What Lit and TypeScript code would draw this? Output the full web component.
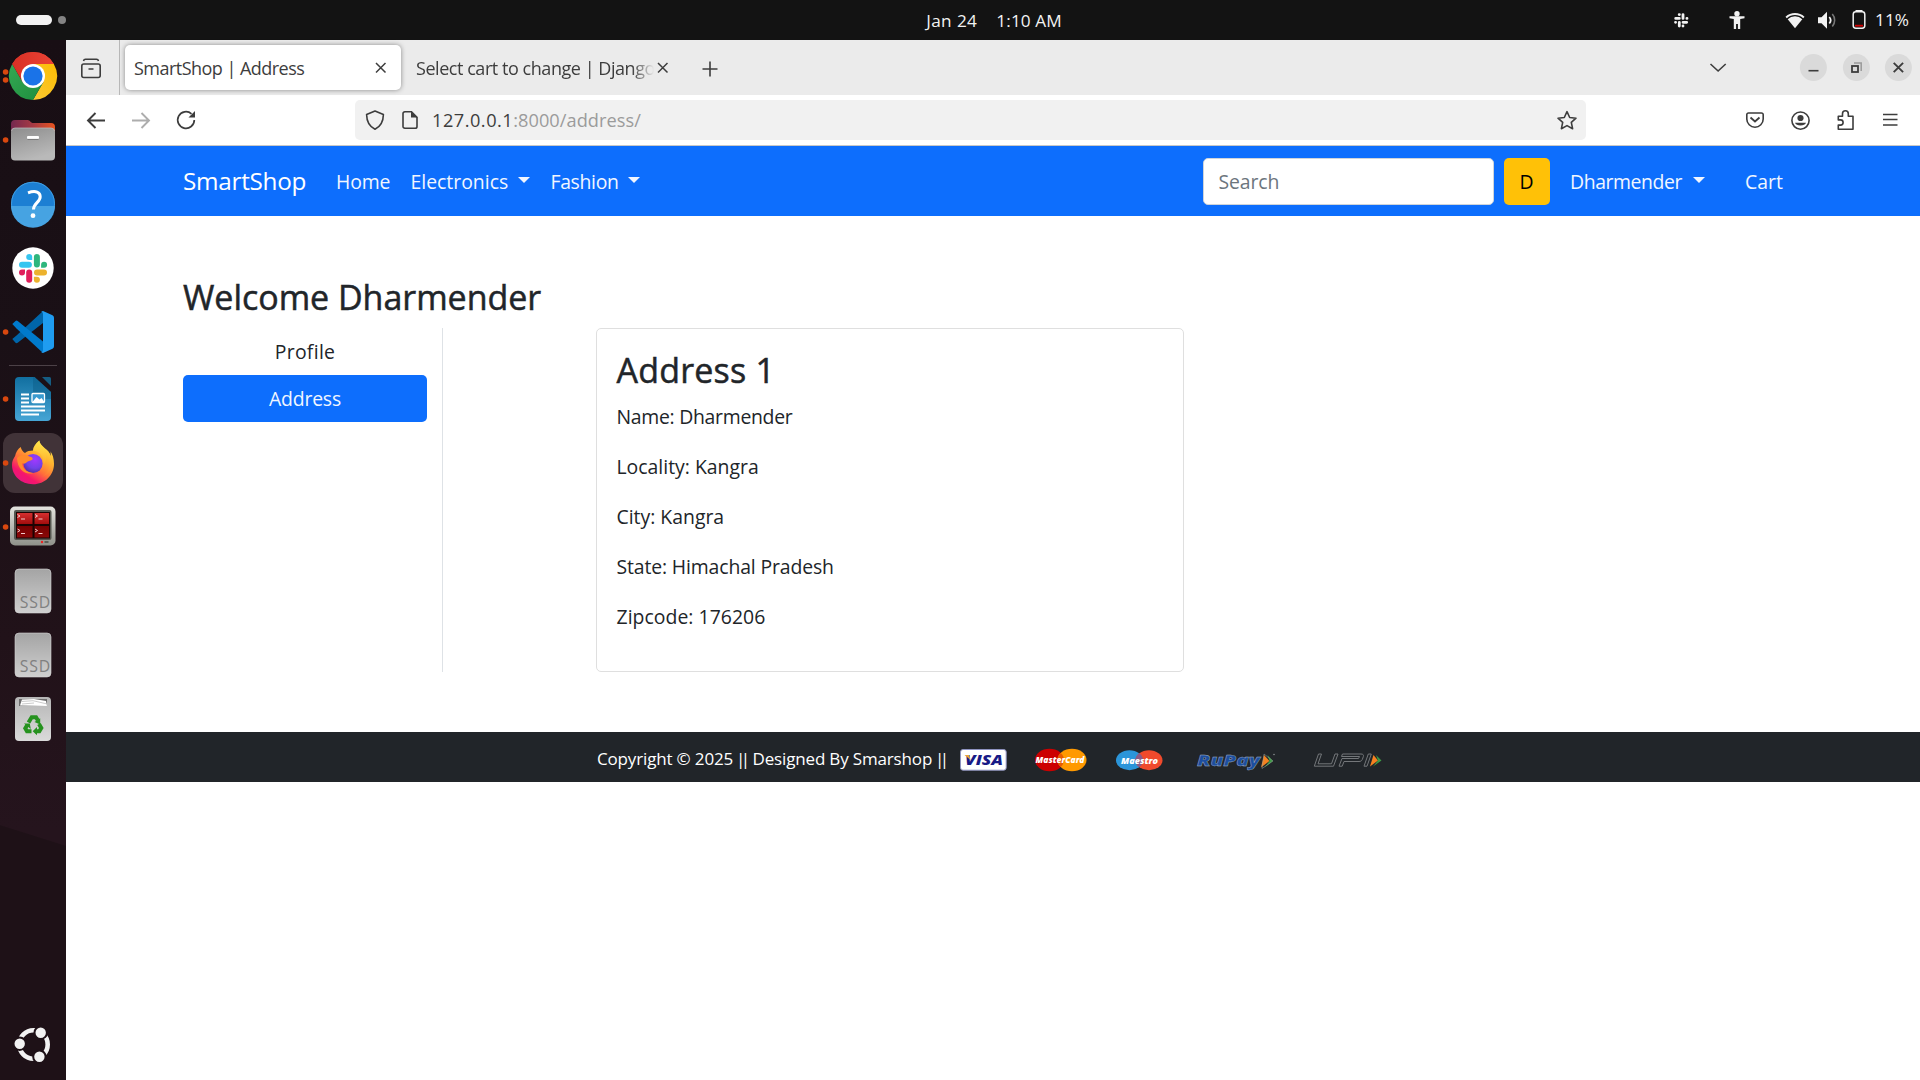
import { LitElement, html, svg, css } from "lit";
import { customElement } from "lit/decorators.js";

const dot = (y: number) => svg`<circle cx="5.6" cy=${y} r="2.8" fill="#d9480f"/>`;

const chrome = svg`
  ${dot(28)}${dot(36)}
  <defs>
    <linearGradient id="cr" x1="0" y1="0" x2="1" y2="0"><stop offset="0" stop-color="#d93025"/><stop offset="1" stop-color="#ea4335"/></linearGradient>
    <linearGradient id="cg" x1="0" y1="0" x2="1" y2="1"><stop offset="0" stop-color="#34a853"/><stop offset="1" stop-color="#1e8e3e"/></linearGradient>
    <linearGradient id="cy" x1="0" y1="1" x2="1" y2="0"><stop offset="0" stop-color="#fcc934"/><stop offset="1" stop-color="#fbbc04"/></linearGradient>
  </defs>
  <path d="M12.2 20A24 24 0 0 1 53.8 20L33 32Z" fill="url(#cr)"/>
  <path d="M53.8 20A24 24 0 0 1 33 56L43.4 38 33 20Z" fill="url(#cy)"/>
  <path d="M33 56A24 24 0 0 1 12.2 20L22.6 38 33 44 43.4 38Z" fill="url(#cg)"/>
  <path d="M12.2 20A24 24 0 0 1 53.8 20L33 20 22.6 38Z" fill="url(#cr)"/>
  <circle cx="33" cy="32" r="12" fill="#fff"/><circle cx="33" cy="32" r="9.6" fill="#1a73e8"/>`;

const files = svg`
  ${dot(32)}
  <defs>
    <linearGradient id="fb" x1="0" y1="0" x2="1" y2="0"><stop offset="0" stop-color="#74284f"/><stop offset=".5" stop-color="#a63a44"/><stop offset="1" stop-color="#e95420"/></linearGradient>
    <linearGradient id="ff" x1="0" y1="0" x2="0.4" y2="1"><stop offset="0" stop-color="#8d8d8d"/><stop offset="1" stop-color="#b9b9b9"/></linearGradient>
  </defs>
  <path d="M11 16a4 4 0 0 1 4-4h12.500c1.500 0 2 .8 3 1.800s1.500 1.200 3 1.200H51a4 4 0 0 1 4 4v15H11Z" fill="url(#fb)"/>
  <rect x="11" y="20" width="44" height="32.500" rx="4" fill="url(#ff)"/>
  <path d="M11.500 23a3.500 3.500 0 0 1 3.500-3H51a3.500 3.500 0 0 1 3.500 3" fill="none" stroke="#c0c0c0" stroke-width=".7"/>
  <rect x="27" y="28" width="12" height="3" rx="1" fill="#fff"/><path d="M27.500 31.400h11" stroke="#6d6d6d" stroke-width=".8"/>`;

const help = svg`
  <circle cx="33" cy="31.700" r="22" fill="#1c7fd3"/>
  <path d="M11 34a22 21.700 0 0 0 44 0Z" fill="#46a3e2"/>
  <circle cx="33" cy="31.700" r="21.500" fill="none" stroke="#4aa6e6" stroke-width=".8"/>
  <path d="M28 20.800c8-3 12.200-.4 12.200 4 0 5.500-6.700 6.400-6.700 12.700" fill="none" stroke="#fff" stroke-width="3"/>
  <circle cx="33" cy="43.700" r="2.400" fill="#fff"/>`;

const slack = svg`
  <circle cx="33" cy="32" r="20.700" fill="#fff"/>
  <g stroke-width="6" stroke-linecap="round">
    <path d="M22 28.700h6.900" stroke="#36c5f0"/><path d="M36.900 21v7.600" stroke="#2eb67d"/>
    <path d="M37 36.500h7" stroke="#ecb22e"/><path d="M29.200 36.500v7.300" stroke="#e01e5a"/>
  </g>
  <path d="M32.200 24v-3a3 3 0 1 0-3 3Z" fill="#36c5f0"/><path d="M41.100 31.700h3a3 3 0 1 0-3-3Z" fill="#2eb67d"/>
  <path d="M33.900 40.800v3a3 3 0 1 0 3-3Z" fill="#ecb22e"/><path d="M25 33.500h-3a3 3 0 1 0 3 3Z" fill="#e01e5a"/>`;

const vscode = svg`
  ${dot(32)}
  <path d="M43 11l-26.500 24.500-4.200 3.500 3.200 3.800q1 .8 2.200 0L43 23Z" fill="#0065a9"/>
  <path d="M12.300 24l3.200-3q1-.8 2.200 0L43 41.500V53L16.500 28.500Z" fill="#007acc"/>
  <path d="M43 11l9.500 4.300q1.500.8 1.500 2.500v28.500q0 1.700-1.500 2.500L43 53l-2-1q2 .5 2-2V14q0-2.500-2-2Z" fill="#1f9cf0"/>`;

const writer = svg`
  ${dot(32)}
  <defs><linearGradient id="wr" x1="0" y1="0" x2="0" y2="1"><stop offset="0" stop-color="#116fa0"/><stop offset="1" stop-color="#46a5d5"/></linearGradient></defs>
  <path d="M19 10h15.500L51 25v25a4 4 0 0 1-4 4H19a4 4 0 0 1-4-4V14a4 4 0 0 1 4-4Z" fill="url(#wr)"/>
  <path d="M33 10h1.500L51 25v7H33Z" fill="#0b5a86" opacity=".45"/>
  <path d="M42 10h7.500q1.500 0 1.500 1.500V19Z" fill="#155d83"/>
  <path d="M21 27.500h8M21 31.500h8M21 35.500h8M21 39.500h24M21 43.500h24M21 47.500h18" stroke="#fff" stroke-width="2"/>
  <rect x="32" y="26.500" width="12.500" height="9" rx="1" fill="#3a9bd0" stroke="#fff" stroke-width="1.300"/>
  <path d="M32.500 35l4-5 3 2.500 2-1.500 3 4Z" fill="#fff"/>`;

const firefox = svg`
  <defs>
    <linearGradient id="fx" x1=".85" y1="0" x2=".2" y2="1"><stop offset="0" stop-color="#fff44f"/><stop offset=".35" stop-color="#ffb02e"/><stop offset=".58" stop-color="#ff7139"/><stop offset=".8" stop-color="#f5156c"/><stop offset="1" stop-color="#e31587"/></linearGradient>
    <radialGradient id="fp" cx=".6" cy=".3" r=".75"><stop offset="0" stop-color="#a238ff"/><stop offset=".6" stop-color="#7141e8"/><stop offset="1" stop-color="#4d2f9e"/></radialGradient>
    <linearGradient id="fy" x1="0" y1="0" x2="0" y2="1"><stop offset="0" stop-color="#ffe94d"/><stop offset=".6" stop-color="#ffb52f"/><stop offset="1" stop-color="#ff7a3a" stop-opacity=".4"/></linearGradient>
  </defs>
  <rect x="3" y="2" width="60" height="60" rx="12" fill="#413338"/>
  ${dot(32)}
  <path d="M39.300 9.500c-3.500 2.500-6 6.500-6.300 10-3 0-6 .8-8 2.400-1.600-.5-3.800-3.200-4.300-6-3 2-5 5.500-5.600 9-2 3-3.100 5.500-3.100 9.100 0 10.500 9 19.200 21 19.200s21-9 21-20.500c0-5.500-1.500-9.500-3.600-12.500.6 2 .7 3.500.5 5-2-7.500-10.600-8.700-11.600-15.700Z" fill="url(#fx)"/>
  <circle cx="33" cy="32.500" r="9.600" fill="url(#fp)"/>
  <path d="M17 27c3-3.200 8-4 12.500-1.500 3 .5 3.500 2 3 3-1.500 1.400-4 1.200-5.500 2.600-1.800 1.800-3 2-5 1.200 1 6.500 6 9.700 11.500 9.700-8 2.500-16-3-16.500-15Z" fill="#ff8a2b"/>
  <path d="M39.300 9.500c-3.500 2.500-6 6.500-6.300 10 6.500.5 11.500 6 10.500 14 4-4.500 3-10 1-13 4 3 6 8 5.500 12-1 8-5 11.500-9 14 9-3.500 12.500-9 11.500-18-.5-3.500-1-5-2-7 0 1.500.4 2.500.4 3.700-2-7.500-10.600-8.700-11.600-15.700Z" fill="url(#fy)" opacity=".75"/>`;

const terminal = svg`
  ${dot(32)}
  <defs>
    <linearGradient id="tf" x1="0" y1="0" x2="0" y2="1"><stop offset="0" stop-color="#e4e4df"/><stop offset="1" stop-color="#8f918a"/></linearGradient>
    <linearGradient id="tr" x1="0" y1="0" x2="0" y2="1"><stop offset="0" stop-color="#d62f2f"/><stop offset=".45" stop-color="#a30d0d"/><stop offset=".5" stop-color="#760000"/><stop offset="1" stop-color="#8a0808"/></linearGradient>
  </defs>
  <rect x="10" y="11.500" width="45.500" height="39" rx="5" fill="url(#tf)"/>
  <rect x="14" y="15" width="37.500" height="30" rx="2" fill="#555750"/>
  <rect x="16" y="17" width="34" height="26.500" fill="#1c0303"/>
  <path d="M17 18h15.500v11H17ZM34.500 18H49v11H34.500ZM17 31h15.500v11.500H17ZM34.500 31H49v11.500H34.500Z" fill="url(#tr)"/>
  <path d="M17.500 19.500l2.500 1.500-2.500 1.500M21 24h4M35 19.500l2.500 1.500-2.500 1.500M38.500 24h4M17.500 34l2.500 1.500-2.500 1.500M21 38.500h4M35 34l2.500 1.500-2.500 1.500M38.500 38.500h4" fill="none" stroke="#f0caca" stroke-width="1"/>
  <circle cx="42" cy="47" r="1.200" fill="#f02020"/><path d="M44.500 47h4" stroke="#5d5f58" stroke-width="2"/>`;

const ssd = svg`
  <defs><linearGradient id="sd" x1="0" y1="0" x2="0" y2="1"><stop offset="0" stop-color="#a4a4a4"/><stop offset="1" stop-color="#cfcfcf"/></linearGradient></defs>
  <rect x="15" y="10" width="36" height="44" rx="4" fill="url(#sd)" stroke="#d5d5d5" stroke-width=".6"/>
  <text x="19.800" y="48.500" class="ssd">SSD</text>`;

const trash = svg`
  <defs><linearGradient id="th" x1="0" y1="0" x2="0" y2="1"><stop offset="0" stop-color="#b6b6b6"/><stop offset="1" stop-color="#dadada"/></linearGradient></defs>
  <rect x="15" y="10" width="36" height="44" rx="4" fill="url(#th)"/>
  <path d="M19 12h28v7H19Z" fill="#6d6d6d"/>
  <path d="M20 18.500l2-6 12-.5 12 2 1 5Z" fill="#fff"/><path d="M22 14.500l11-.8 13 3M22 17l12-1" fill="none" stroke="#b5b5b5" stroke-width=".7"/>
  <g fill="none" stroke="#26921f" stroke-width="4">
    <path d="M28.500 35.500l3.200-5.200h4.300l1.800 3"/>
    <path d="M39 37l2.300 4-2 3.300h-3.800"/>
    <path d="M31.500 44.300h-4.500l-1.700-3 2-3.300"/>
  </g>
  <path d="M34.500 35l5.700-3.800v6.300ZM37 40v8.200l-4.300-4ZM24 36.500l5.800 0 1 5.500Z" fill="#26921f"/>`;

const ubuntu = svg`
  <circle cx="33.500" cy="32.500" r="14.200" fill="none" stroke="#f2f2f2" stroke-width="4.600"/>
  <g fill="#f2f2f2" stroke="#1e1117" stroke-width="2">
    <circle cx="40.700" cy="20.700" r="6.200"/><circle cx="19.700" cy="31.700" r="6.200"/><circle cx="39.400" cy="44.700" r="6.200"/>
  </g>`;

@customElement("side-dock")
class SideDock extends LitElement {
  static styles = css`
    :host { display: flex; flex-direction: column; width: 66px; flex: none; height: 1040px;
      background: linear-gradient(180deg, #180e14 0, #1a1016 300px, #211219 600px, #25141d 790px, #25141d 100%); }
    svg { display: block; width: 66px; height: 64px; flex: none; }
    .first { height: 68px; }
    .rule { height: 1px; margin: 1px 9px; background: #4c4147; flex: none; }
    .rest { flex: 1; display: flex; flex-direction: column; justify-content: flex-end; padding-bottom: 4px;
      background: linear-gradient(197.500deg, transparent 90px, #1e1117 91px); }
    .ssd { font: 15.8px "Open Sans", sans-serif; fill: #808080; letter-spacing: .8px; }
  `;
  private icon(g: unknown) { return html`<svg viewBox="0 0 66 64">${g}</svg>`; }
  render() {
    return html`
      <svg class="first" viewBox="0 -4 66 68">${chrome}</svg>
      ${[files, help, slack, vscode].map((i) => this.icon(i))}
      <div class="rule"></div>
      ${[writer, firefox, terminal, ssd, ssd, trash].map((i) => this.icon(i))}
      <div class="rest">${this.icon(ubuntu)}</div>`;
  }
}

@customElement("top-panel")
class TopPanel extends LitElement {
  static styles = css`
    :host { display: grid; grid-template-columns: 1fr auto 1fr; align-items: center; height: 40px; background: #131313; color: #f2f2f2; font: 17.2px/40px "Open Sans", sans-serif; }
    .ws { display: flex; align-items: center; gap: 6px; padding-left: 16px; }
    .pill { width: 36px; height: 10px; border-radius: 5px; background: #f2f2f2; }
    .dot { width: 8px; height: 8px; border-radius: 50%; background: #848484; }
    .clock { display: flex; gap: 19px; padding-left: 68px; line-height: 39px; }
    .date { letter-spacing: .4px; } .time { letter-spacing: .1px; }
    .tray { display: flex; justify-content: flex-end; align-items: center; padding-right: 11px; }
    svg { display: block; width: 210px; height: 40px; }
    .pct { width: 34px; letter-spacing: .1px; padding-left: 8px; }
  `;
  render() {
    return html`
      <div class="ws"><span class="pill"></span><span class="dot"></span></div>
      <div class="clock"><span class="date">Jan 24</span><span class="time">1:10 AM</span></div>
      <div class="tray">
        <svg viewBox="1657 0 210 40" fill="#f2f2f2">
          <g stroke="#f2f2f2" stroke-width="2.800" stroke-linecap="round">
            <path d="M1675.700 18.400h3.600M1683 14.600v3.800M1683 22.300h3.700M1679.300 22.300v3.700M1679.200 14.600h.2M1686.900 18.400h.1M1683 26v-.1M1675.500 22.300h.1"/>
          </g>
          <circle cx="1737" cy="13.700" r="2.700"/>
          <path d="M1729.500 16.300h15v1.900l-4.300.8v10h-2.300v-5h-1.800v5h-2.300v-10l-4.300-.8Z"/>
          <path d="M1785.500 16.700a14 14 0 0 1 19 0l-1.300 1.500a12 12 0 0 0-16.400 0Z"/>
          <path d="M1787.700 19.300a10.500 10.500 0 0 1 14.600 0L1795 28.300Z"/>
          <path d="M1818 17.300h3.500l5.500-5.500v17l-5.500-5.500h-3.500Z"/>
          <path d="M1829.300 17a5 5 0 0 1 0 6.500" fill="none" stroke="#f2f2f2" stroke-width="1.800"/>
          <path d="M1832.300 14a9.500 9.500 0 0 1 0 12.500" fill="none" stroke="#777" stroke-width="1.600"/>
          <rect x="1853.200" y="11.800" width="11.600" height="16.400" rx="2.600" fill="none" stroke="#f2f2f2" stroke-width="1.500"/>
          <path d="M1855.500 10h7v1.800h-7Z"/><path d="M1855 25.700h8" stroke="#d00000" stroke-width="1.800"/>
        </svg>
        <span class="pct">11%</span>
      </div>`;
  }
}

@customElement("browser-chrome")
class BrowserChrome extends LitElement {
  static styles = css`
    :host { display: block; font: 18.2px "Open Sans", sans-serif; color: #3d3d3d; }
    svg { display: block; flex: none; fill: none; stroke: #3d3d3d; stroke-width: 1.6; }
    .tabs { display: flex; align-items: center; height: 55px; background: #ebebeb; }
    .view { width: 49px; padding-right: 4px; height: 55px; border-right: 1px solid #b8b8b8; display: flex; align-items: center; justify-content: center; }
    .tab { display: flex; align-items: center; justify-content: space-between; width: 276px; height: 45px; margin-left: 5px; padding: 0 14px 0 9px; box-sizing: border-box; border-radius: 5px; line-height: 46px; }
    .active { background: #fff; box-shadow: 0 0 5px rgba(0,0,0,.42); }
    .t1 { font-size: 18px; letter-spacing: -.53px; }
    .t2 { font-size: 18px; letter-spacing: -.45px; white-space: nowrap; -webkit-mask-image: linear-gradient(90deg, #000 216px, transparent 238px); mask-image: linear-gradient(90deg, #000 216px, transparent 238px); }
    .second { margin-left: 6px; }
    .plus { margin: 2px 0 0 19px; }
    .win { margin-left: auto; width: 216px; height: 55px; }
    .bar { display: flex; align-items: center; height: 50px; background: #fff; border-bottom: 1px solid #c8c8c8; }
    .nav { width: 289px; height: 50px; }
    .url { display: flex; align-items: center; width: 1231px; height: 40px; border-radius: 5px; background: #f1f1f1; line-height: 40px; }
    .host { letter-spacing: .5px; } .path { color: #9b9b9b; letter-spacing: .04px; margin-right: auto; }
    .menu { margin-left: auto; width: 190px; height: 50px; }
  `;
  render() {
    const x = svg`<path d="M1 1l9.500 9.500M10.500 1L1 10.500" stroke-width="1.500"/>`;
    return html`
      <div class="tabs">
        <div class="view"><svg width="22" height="22" viewBox="80 57 22 22"><rect x="81.800" y="64" width="18.400" height="13.500" rx="2"/><path d="M83.500 61c.3-1.300 1-1.700 2-1.700h11c1 0 1.700.4 2 1.700M88.500 69h5"/></svg></div>
        <div class="tab active"><span class="t1">SmartShop | Address</span><svg width="12" height="12">${x}</svg></div>
        <div class="tab second"><span class="t2">Select cart to change | Django</span><svg width="12" height="12">${x}</svg></div>
        <svg class="plus" width="16" height="16"><path d="M8 .5v15M.5 8h15"/></svg>
        <svg class="win" viewBox="1704 40 216 55">
          <path d="M1710.500 64l7.600 7 7.600-7"/>
          <g fill="#dadada" stroke="none"><circle cx="1813.400" cy="67.500" r="13.500"/><circle cx="1856.400" cy="67.500" r="13.500"/><circle cx="1898.400" cy="67.500" r="13.500"/></g>
          <path d="M1808.500 70.700h10"/><path d="M1893.700 62.800l9.400 9.400M1903.100 62.800l-9.400 9.400" stroke-width="1.900"/>
          <rect x="1852" y="66" width="6" height="6" stroke-width="1.800"/><path d="M1854 63h7.200v8" stroke="#9a9a9a" stroke-width="1.500"/>
        </svg>
      </div>
      <div class="bar">
        <svg class="nav" viewBox="66 95 289 50">
          <path d="M88 120.500h17M95.500 113l-7.500 7.500 7.500 7.500" stroke-width="1.900"/>
          <path d="M132 120.500h17M141.500 113l7.500 7.500-7.500 7.500" stroke="#adadad" stroke-width="1.900"/>
          <path d="M194.300 120a8.300 8.300 0 1 1-2.800-6.200" stroke-width="1.700"/><path d="M195 111v6.500h-6.500Z" fill="#3d3d3d" stroke="none"/>
        </svg>
        <div class="url">
          <svg width="77" height="40" viewBox="355 100 77 40" stroke="#555">
            <path d="M375 111l8.400 3.600c-.1 6.500-2 11.700-8.400 14.700-6.400-3-8.300-8.200-8.400-14.700Z" stroke-linejoin="round"/>
            <path d="M411.500 111.800h-6.700a1.800 1.800 0 0 0-1.800 1.800v12.800a1.800 1.800 0 0 0 1.800 1.800h10.400a1.800 1.800 0 0 0 1.800-1.800v-9Z"/><path d="M411 111.500l6.300 6h-6.300Z" fill="#3d3d3d" stroke="none"/>
          </svg>
          <span class="host">127.0.0.1</span><span class="path">:8000/address/</span>
          <svg width="38" height="40" viewBox="1548 100 38 40"><path d="M1567 111.700l2.700 5.800 6.300.7-4.700 4.200 1.300 6.300-5.600-3.100-5.600 3.100 1.300-6.300-4.700-4.200 6.300-.7Z" stroke-linejoin="round"/></svg>
        </div>
        <svg class="menu" viewBox="1730 95 190 50">
          <path d="M1748.500 113h13a1.700 1.700 0 0 1 1.700 1.700v4.300a8.200 8.200 0 0 1-16.400 0v-4.300a1.700 1.700 0 0 1 1.700-1.700Z"/><path d="M1750.500 117.500l4.500 4 4.500-4" stroke-width="1.800"/>
          <circle cx="1800.500" cy="120.600" r="8.600"/><circle cx="1800.500" cy="118" r="3.100" fill="#3d3d3d" stroke="none"/><path d="M1795 122.800h11a5.700 3.500 0 0 1-11 0Z" fill="#3d3d3d" stroke="none"/>
          <path d="M1838.300 116.300h4.200v-2.600a2.900 2.900 0 0 1 5.800 0v2.600h4.700v13h-14.700v-4.200h2.200a2.600 2.600 0 0 0 0-5.200h-2.200Z" stroke-linejoin="round"/>
          <path d="M1883 114.500h14.500M1883 119.500h14.500M1883 125h14.500"/>
        </svg>
      </div>`;
  }
}

@customElement("shop-nav")
class ShopNav extends LitElement {
  static styles = css`
    :host { display: flex; align-items: center; height: 70px; padding: 1px 127px 0 117px; box-sizing: border-box; background: #0d6efd; color: #f1f6ff; font: 19.4px/30px "Open Sans", sans-serif; }
    .brand { width: 153px; font-size: 24.3px; letter-spacing: -.28px; color: #fff; padding-bottom: 1px; }
    a { display: flex; align-items: center; }
    .home { width: 74.500px; letter-spacing: -.14px; }
    .elec { width: 140px; }
    .fash { letter-spacing: -.33px; }
    .caret { width: 0; border: 6px solid transparent; border-top-color: #f1f6ff; border-bottom: 0; margin: 0 0 3px 9.500px; }
    .elec .caret { margin-left: 10px; }
    .search { width: 291px; height: 47px; box-sizing: border-box; margin-left: auto; padding: 0 15px; border: 1px solid #ced4da; border-radius: 5px; background: #fff; color: #6c757d; line-height: 45px; letter-spacing: -.1px; }
    .go { width: 46px; height: 47px; margin-left: 10px; border-radius: 5px; background: #ffc107; color: #000; line-height: 47px; text-align: center; }
    .user { margin-left: 20.500px; width: 175px; letter-spacing: -.4px; }
    .user .caret { margin-left: 10.500px; }
    .cart { width: 48px; }
  `;
  render() {
    return html`
      <a class="brand">SmartShop</a>
      <a class="home">Home</a>
      <a class="elec">Electronics<i class="caret"></i></a>
      <a class="fash">Fashion<i class="caret"></i></a>
      <div class="search">Search</div><div class="go">D</div>
      <a class="user">Dharmender<i class="caret"></i></a>
      <a class="cart">Cart</a>`;
  }
}

@customElement("shop-footer")
class ShopFooter extends LitElement {
  static styles = css`
    :host { display: flex; align-items: center; height: 50px; padding: 4px 0 0 531px; box-sizing: border-box; background: #212529; color: #fff; font: 17px/30px "Open Sans", sans-serif; }
    .copy { width: 362px; letter-spacing: -.16px; white-space: nowrap; }
    .bars { letter-spacing: -4.4px; margin: 0 2.5px 0 -1.5px; }
    svg { display: block; width: 430px; height: 46px; }
    text { font-family: "Open Sans", sans-serif; font-weight: 800; font-style: italic; }
    .visa { font-size: 14.5px; fill: #171a86; } .mc { font-size: 9px; fill: #fff; } .rp { font-size: 16px; fill: #1d4e9e; stroke: #a9b8cc; stroke-width: .35px; }
  `;
  render() {
    return html`
      <span class="copy">Copyright © 2025 <span class="bars">||</span> Designed By Smarshop <span class="bars">||</span></span>
      <svg viewBox="959 736 430 46">
        <rect x="960.500" y="749.500" width="45.700" height="20.700" rx="2.500" fill="#fff" stroke="#8e93c0" stroke-width="1"/>
        <text class="visa" x="965" y="765" textLength="38" lengthAdjust="spacingAndGlyphs">VISA</text><path d="M964.500 755h4.500l1.500 5Z" fill="#e8a33a"/>
        <ellipse cx="1049.500" cy="760" rx="14.500" ry="11.300" fill="#cc0000"/><ellipse cx="1072" cy="760" rx="14.500" ry="11.300" fill="#ff9900"/>
        <path d="M1060.700 753a14.500 11 0 0 1 0 14 14.500 11 0 0 1 0-14Z" fill="#e65c00"/>
        <text class="mc" x="1035.500" y="763.300" textLength="49" lengthAdjust="spacingAndGlyphs">MasterCard</text>
        <ellipse cx="1129.500" cy="760.300" rx="13.500" ry="10" fill="#2b95d9"/><ellipse cx="1149" cy="760.300" rx="13.500" ry="10" fill="#f04a2c"/>
        <path d="M1139.300 753.300a13.500 10 0 0 1 0 14 13.500 10 0 0 1 0-14Z" fill="#8a5a86"/>
        <text class="mc" x="1121" y="763.500" textLength="37" lengthAdjust="spacingAndGlyphs">Maestro</text>
        <text class="rp" x="1197" y="766" textLength="63" lengthAdjust="spacingAndGlyphs">RuPay</text>
        <path d="M1264 755l5.500 6-8.500 6.500Z" fill="#f58220"/><path d="M1267.500 755l5.500 6-8.500 6.500 5-6.500Z" fill="#3d9b45"/><path d="M1264 754l9 7-11 7.500Z" fill="none" stroke="#9aa29c" stroke-width=".5"/>
        <circle cx="1274" cy="754.500" r=".8" fill="#8a8d90"/>
        <g fill="none" stroke="#74777a" stroke-width="1">
          <path d="M1318.500 754h3l-3.500 9.800h13.500l3.500-9.800h3l-4.500 12.200h-19.200ZM1339 766.200l3-7.700h16.500l1-2h-18l1-2.500h18.500c2 0 3 1 2.300 2.700l-1 2.800c-.5 1.300-1.700 2-3.300 2h-15l-1.800 4.700ZM1364 766.200l4.300-12.200h3l-4.300 12.200Z"/>
        </g>
        <path d="M1373.500 755l4.500 5.500-8 6Z" fill="#f58220"/><path d="M1376 755l5.500 5.500-8.500 6 5-6Z" fill="#3d9b45"/>
      </svg>`;
  }
}

@customElement("app-root")
class AppRoot extends LitElement {
  static styles = css`
    :host { display: block; width: 1920px; height: 1080px; overflow: hidden; background: #fff; color: #212529; font: 19.4px/30px "Open Sans", sans-serif; }
    .desk { display: flex; } .window { flex: 1; min-width: 0; }
    main { padding: 60px 0 60px 117px; }
    h3 { margin: 0; font-size: 34px; line-height: 42px; font-weight: 500; -webkit-text-stroke: .5px #212529; }
    .welcome { margin-bottom: 10px; letter-spacing: -.03px; }
    .row { display: flex; height: 344px; }
    .side { width: 259px; border-right: 1px solid #dee2e6; }
    .item { width: 244px; height: 47px; line-height: 47px; text-align: center; border-radius: 5px; }
    .profile { letter-spacing: .3px; }
    .current { background: #0d6efd; color: #f1f6ff; letter-spacing: -.2px; }
    .card { width: 588px; box-sizing: border-box; margin-left: 153px; padding: 20px 19.5px; border: 1px solid #dfdfdf; border-radius: 5px; }
    .title { margin-bottom: 11px; letter-spacing: .2px; }
    p { margin: 0 0 20px; }
    .name { letter-spacing: -.28px; } .state { letter-spacing: -.13px; } .zip { letter-spacing: .04px; }
  `;
  render() {
    return html`
      <top-panel></top-panel>
      <div class="desk">
        <side-dock></side-dock>
        <div class="window">
          <browser-chrome></browser-chrome>
          <shop-nav></shop-nav>
          <main>
            <h3 class="welcome">Welcome Dharmender</h3>
            <div class="row">
              <div class="side"><div class="item profile">Profile</div><div class="item current">Address</div></div>
              <div class="card">
                <h3 class="title">Address 1</h3>
                <p class="name">Name: Dharmender</p>
                <p>Locality: Kangra</p>
                <p>City: Kangra</p>
                <p class="state">State: Himachal Pradesh</p>
                <p class="zip">Zipcode: 176206</p>
              </div>
            </div>
          </main>
          <shop-footer></shop-footer>
        </div>
      </div>`;
  }
}
